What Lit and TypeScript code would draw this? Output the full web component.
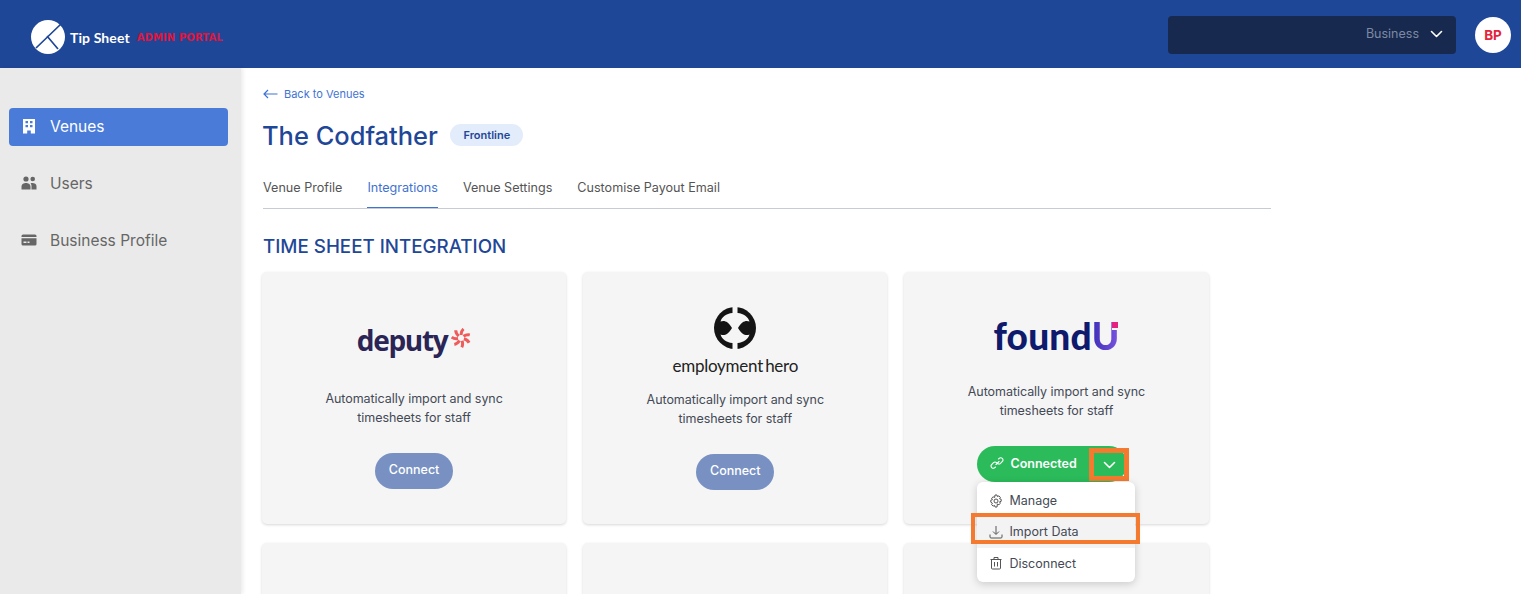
import { LitElement, html, css, svg } from "lit"
import { customElement } from "lit/decorators.js"

const chevron = svg`<path d="M1.5 1.5 6.5 6.5 11.5 1.5" fill="none" stroke="currentColor" stroke-width="1.6" stroke-linecap="round" stroke-linejoin="round"/>`

const spokes = [0, 55, 105, 160, 210, 260, 310]

@customElement("app-root")
export class AppRoot extends LitElement {
  static styles = css`
    :host {
      display: block;
      height: 594px;
      overflow: hidden;
      background: #fff;
      font-family: Inter, "Liberation Sans", sans-serif;
      color: #3f4652;
    }
    .topbar {
      height: 68px;
      box-sizing: border-box;
      background: #1f4797;
      display: flex;
      align-items: center;
      padding: 2px 10px 0 31px;
    }
    .brand {
      display: flex;
      align-items: center;
      flex: 1;
      margin-top: 4px;
    }
    .brand svg { margin-right: 5px; }
    .brand-name {
      color: #fff;
      font: 700 14px Lato, "Liberation Sans", sans-serif;
      letter-spacing: 0.1px;
    }
    .brand-tag {
      color: #e0153d;
      font: 700 10px "DejaVu Sans", sans-serif;
      letter-spacing: 0.1px;
      margin-left: 7px;
    }
    .picker {
      width: 288px;
      height: 38px;
      box-sizing: border-box;
      background: #17294f;
      border-radius: 4px;
      display: flex;
      align-items: center;
      justify-content: flex-end;
      padding: 0 13px 3px 0;
      gap: 11px;
      color: #7d89a3;
      font-size: 12.5px;
    }
    .picker svg { color: #fff; }
    .avatar {
      width: 36px;
      height: 36px;
      margin-left: 19px;
      border-radius: 50%;
      background: #fff;
      color: #e3243b;
      font-weight: 700;
      font-size: 13.5px;
      display: flex;
      align-items: center;
      justify-content: center;
    }
    .body { display: flex; height: 526px; }
    .sidebar {
      width: 241px;
      flex: none;
      box-sizing: border-box;
      background: #eaeaea;
      box-shadow: 2px 0 4px rgba(0, 0, 0, 0.08);
      padding: 40px 13px 0 9px;
      display: flex;
      flex-direction: column;
      gap: 19px;
    }
    .nav {
      height: 38px;
      box-sizing: border-box;
      border-radius: 4px;
      display: flex;
      align-items: center;
      gap: 13px;
      padding: 0 0 2px 12px;
      font-size: 15.5px;
      color: #666;
    }
    .nav.on { background: #4a7bd8; color: #fff; }
    .main { flex: 1; padding: 18px 0 0 22px; }
    .back {
      display: flex;
      align-items: center;
      gap: 6px;
      height: 15px;
      font-size: 11px;
      color: #3f73d1;
    }
    .title-row {
      display: flex;
      align-items: center;
      gap: 12.5px;
      margin-top: 14px;
      height: 40px;
    }
    h1 {
      margin: 0 0 0 -1px;
      font-size: 25.45px;
      font-weight: 500;
      color: #1f4797;
    }
    .badge {
      background: #e3ecfa;
      color: #1f4797;
      font-size: 11px;
      font-weight: 600;
      height: 22px;
      width: 73px;
      border-radius: 11px;
      display: flex;
      align-items: center;
      justify-content: center;
    }
    .tabs {
      width: 1008px;
      height: 41px;
      margin-top: 12px;
      border-bottom: 1px solid #c6cbd4;
      display: flex;
      gap: 25px;
      font-size: 12.6px;
      color: #555;
    }
    .tab { padding-top: 13px; box-sizing: border-box; height: 41px; }
    .tab.on { color: #3f73d1; border-bottom: 1px solid #3f73d1; }
    h2 {
      margin: 26px 0 0;
      height: 24px;
      line-height: 24px;
      font-size: 18.75px;
      font-weight: 500;
      color: #1f4797;
    }
    .cards {
      display: grid;
      grid-template-columns: repeat(3, 304.2px);
      grid-auto-rows: 252px;
      gap: 19px 17px;
      margin: 13px 0 0 -1px;
    }
    .card {
      background: #f5f5f5;
      border-radius: 5px;
      box-shadow: 0 1px 3px rgba(0, 0, 0, 0.16);
      display: flex;
      flex-direction: column;
      align-items: center;
      text-align: center;
    }
    .logo {
      flex: none;
      display: flex;
      flex-direction: column;
      align-items: center;
      justify-content: flex-end;
      box-sizing: border-box;
    }
    .deputy {
      height: 84px;
      padding-top: 52px;
      flex-direction: row;
      align-items: center;
      gap: 4px;
    }
    .deputy-word {
      font: 700 28px "Open Sans", sans-serif;
      letter-spacing: -1.3px;
      color: #2a2556;
    }
    .deputy svg { margin-top: -4px; }
    .hero { height: 85px; justify-content: flex-start; padding-top: 35px; }
    .hero-word {
      font: 400 17px Lato, sans-serif;
      letter-spacing: -0.25px;
      word-spacing: -2px;
      color: #222;
      margin-top: 7px;
      line-height: 20px;
    }
    .found { height: 77px; flex-direction: row; align-items: flex-end; }
    .found-word, .found-u {
      font: 900 37px/30px Lato, sans-serif;
      margin-bottom: -2px;
    }
    .found-word {
      color: #0f1a6c;
      letter-spacing: 0.2px;
    }
    .found-u {
      position: relative;
      background: linear-gradient(90deg, #3c2fb8, #7a55e0);
      -webkit-background-clip: text;
      background-clip: text;
      color: transparent;
    }
    .found-dot {
      position: absolute;
      top: 1px;
      right: 1px;
      width: 6px;
      height: 6px;
      background: #e5207f;
      box-shadow: 0 2px 0 #f5f5f5;
    }
    .desc {
      font-size: 12.5px;
      line-height: 19px;
      color: #444a55;
      letter-spacing: -0.05px;
      margin-top: 33px;
    }
    .connect {
      margin-top: 26px;
      width: 78px;
      height: 36px;
      border: 0;
      padding: 0 0 3px;
      border-radius: 18px;
      background: #7891c2;
      color: #fff;
      font: 500 12.5px Inter, sans-serif;
    }
    .split {
      position: relative;
      margin-top: 26px;
      width: 158px;
      height: 36px;
    }
    .split-btn {
      width: 150px;
      height: 36px;
      box-sizing: border-box;
      background: #2bbb5b;
      border-radius: 18px;
      color: #fff;
      font-size: 12.5px;
      font-weight: 600;
      display: flex;
      align-items: center;
      padding: 0 0 2px 13px;
      gap: 6px;
    }
    .split-mark {
      position: absolute;
      left: 112px;
      top: 2px;
      width: 40px;
      height: 33px;
      box-sizing: border-box;
      border: 5px solid #f37a2e;
      color: #fff;
      display: flex;
      align-items: center;
      justify-content: center;
    }
    .menu {
      position: absolute;
      left: 0;
      top: 36px;
      width: 158px;
      height: 100px;
      box-sizing: border-box;
      padding-top: 3px;
      background: #fff;
      border-radius: 6px;
      box-shadow: 0 2px 8px rgba(0, 0, 0, 0.18);
      color: #444a55;
      font-size: 12.5px;
      text-align: left;
    }
    .item {
      height: 31.5px;
      display: flex;
      align-items: center;
      gap: 6px;
      padding-left: 12px;
    }
    .item.hl { background: #f3f3f3; height: 31px; padding-bottom: 1px; box-sizing: border-box; }
    .item-mark {
      position: absolute;
      left: -6px;
      top: 31px;
      width: 169px;
      height: 31px;
      box-sizing: border-box;
      border: 4px solid #f37a2e;
    }
    svg { display: block; flex: none; }
  `

  render() {
    const desc = html`<div class="desc">Automatically import and sync<br />timesheets for staff</div>`
    return html`
      <header class="topbar">
        <div class="brand">
          <svg width="34" height="34" viewBox="0 0 34 34">
            <circle cx="17" cy="17" r="17" fill="#fff" />
            <path d="M30 4 5 28M16 16 27 29" stroke="#1f4797" stroke-width="1.7" fill="none" />
          </svg>
          <span class="brand-name">Tip Sheet</span>
          <span class="brand-tag">ADMIN PORTAL</span>
        </div>
        <div class="picker">
          <span>Business</span>
          <svg width="13" height="8" viewBox="0 0 13 8">${chevron}</svg>
        </div>
        <div class="avatar">BP</div>
      </header>
      <div class="body">
        <nav class="sidebar">
          <div class="nav on">
            <svg width="16" height="16" viewBox="0 0 16 16">
              <path fill="currentColor" fill-rule="evenodd" d="M2 1h12v14.500H9.800V12.500H6.200v3H2zM4.500 3v2.200h2.500V3zm4.500 0v2.200h2.500V3zM4.500 7v2.200h2.500V7zm4.500 0v2.200h2.500V7z" />
            </svg>
            Venues
          </div>
          <div class="nav">
            <svg width="16" height="14" viewBox="-0.500 0 16 14">
              <circle cx="4.500" cy="3" r="2.600" fill="currentColor" />
              <circle cx="11.200" cy="3" r="2.300" fill="currentColor" />
              <path fill="currentColor" d="M0 13.500V10.500C0 8 2.500 7 4.500 7S9 8 9 10.500V13.500zM10 13.500V10C10 8.800 9.500 8 9 7.300 9.500 7.100 10.500 7 11 7 13 7 15 8 15 10.200V13.500z" />
            </svg>
            Users
          </div>
          <div class="nav">
            <svg width="16" height="16" viewBox="0 0 16 16">
              <path fill="currentColor" fill-rule="evenodd" d="M2 2.500h12a1.500 1.500 0 0 1 1.500 1.500v1H.5V4A1.500 1.500 0 0 1 2 2.500zM.5 6.200h15V12a1.500 1.500 0 0 1-1.500 1.500H2A1.500 1.500 0 0 1 .5 12zm2 3.300v1.500h3V9.500zm4 0v1.500h2V9.500z" />
            </svg>
            Business Profile
          </div>
        </nav>
        <main class="main">
          <div class="back">
            <svg width="15" height="10" viewBox="0 0 15 10">
              <path d="M14.500 5H1M5 1 1 5l4 4" fill="none" stroke="currentColor" stroke-width="1.200" />
            </svg>
            Back to Venues
          </div>
          <div class="title-row">
            <h1>The Codfather</h1>
            <span class="badge">Frontline</span>
          </div>
          <div class="tabs">
            <div class="tab">Venue Profile</div>
            <div class="tab on">Integrations</div>
            <div class="tab">Venue Settings</div>
            <div class="tab">Customise Payout Email</div>
          </div>
          <h2>TIME SHEET INTEGRATION</h2>
          <section class="cards">
            <article class="card">
              <div class="logo deputy">
                <span class="deputy-word">deputy</span>
                <svg width="20" height="20" viewBox="0 0 20 20">
                  ${spokes.map(
                    (a) => svg`<path d="M10 7C10 4.500 10.800 2.500 12.500 1" stroke="#ef5a5a" stroke-width="3" fill="none" transform="rotate(${a} 10 10)" />`
                  )}
                </svg>
              </div>
              ${desc}
              <button class="connect">Connect</button>
            </article>
            <article class="card">
              <div class="logo hero">
                <svg width="42" height="42" viewBox="0 0 42 42">
                  <circle cx="21" cy="21" r="21" fill="#141414" />
                  <path fill="#f5f5f5" d="M18.500 0H23.500V6C30 6.500 34 10 35.500 14.500 32 13 28 14 24 21 28 28 32 29 35.500 27.500 34 32 30 35.500 23.500 36V42H18.500V36C12 35.500 8 32 6.500 27.500 10 29 14 28 18 21 14 14 10 13 6.500 14.500 8 10 12 6.500 18.500 6Z" />
                </svg>
                <span class="hero-word">employment hero</span>
              </div>
              ${desc}
              <button class="connect">Connect</button>
            </article>
            <article class="card">
              <div class="logo found">
                <span class="found-word">found</span><span class="found-u">U<i class="found-dot"></i></span>
              </div>
              ${desc}
              <div class="split">
                <div class="split-btn">
                  <svg width="14" height="14" viewBox="0 0 14 14" fill="none" stroke="currentColor" stroke-width="1.100" stroke-linecap="round">
                    <path d="M6 8.500 9 5.500M8.500 3 9.800 1.900a2.300 2.300 0 0 1 3 3L10.500 7.300a2.300 2.300 0 0 1-3 .2M5.500 11l-1.300 1.100a2.300 2.300 0 0 1-3-3L3.500 6.700a2.300 2.300 0 0 1 3-.2" />
                  </svg>
                  Connected
                </div>
                <div class="split-mark">
                  <svg width="13" height="8" viewBox="0 0 13 8">${chevron}</svg>
                </div>
                <div class="menu">
                  <div class="item">
                    <svg width="14" height="14" viewBox="0 0 14 14" fill="none" stroke="#555" stroke-width="1">
                      <circle cx="7" cy="7" r="2" />
                      <path d="M6 1h2l.4 1.600 1.500-.7 1.500 1.400-.8 1.500 1.600.5v2l-1.600.5.800 1.500-1.500 1.400-1.500-.7L8 13H6l-.4-1.600-1.500.7-1.500-1.400.8-1.500L1.800 8.200v-2l1.600-.5-.8-1.500 1.500-1.400 1.500.7z" />
                    </svg>
                    Manage
                  </div>
                  <div class="item hl">
                    <svg width="14" height="14" viewBox="0 0 14 14" fill="none" stroke="#555" stroke-width="1">
                      <path d="M7 1v8M4 6.500 7 9.500l3-3M1 9.500V12a1 1 0 0 0 1 1h10a1 1 0 0 0 1-1V9.500" />
                    </svg>
                    Import Data
                  </div>
                  <div class="item">
                    <svg width="14" height="14" viewBox="0 0 14 14" fill="none" stroke="#555" stroke-width="1">
                      <path d="M1.500 3.500h11M5 3.500V1.500h4v2M2.500 3.500V12a1 1 0 0 0 1 1h7a1 1 0 0 0 1-1V3.500M5.500 6v4.500M8.500 6v4.500" />
                    </svg>
                    Disconnect
                  </div>
                  <div class="item-mark"></div>
                </div>
              </div>
            </article>
            <article class="card"></article>
            <article class="card"></article>
            <article class="card"></article>
          </section>
        </main>
      </div>
    `
  }
}
